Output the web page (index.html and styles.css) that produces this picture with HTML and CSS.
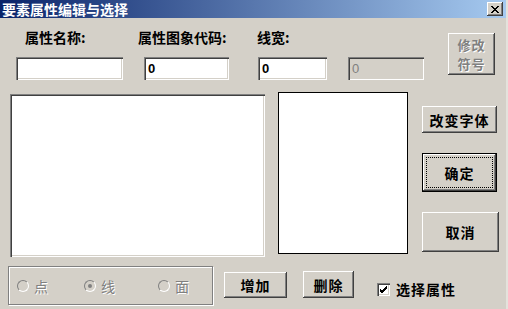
FILE: index.html
```html
<!DOCTYPE html>
<html lang="zh-CN">
<head>
    <meta charset="UTF-8">
    <title>要素属性编辑与选择</title>
    <link rel="stylesheet" href="styles.css">
</head>
<body>
    <div class="window">
        <div class="titlebar">
            <span class="title">要素属性编辑与选择</span>
            <span class="close">
                <svg width="8" height="7" viewBox="0 0 8 7">
                    <path d="M0 0 L7 7 M1 0 L8 7 M7 0 L0 7 M8 0 L1 7" stroke="#000" stroke-width="1" fill="none"/>
                </svg>
            </span>
        </div>
        <div class="content">
            <div class="top">
                <div class="field f-name">
                    <span class="label">属性名称:</span>
                    <div class="edit"></div>
                </div>
                <div class="field f-code">
                    <span class="label">属性图象代码:</span>
                    <div class="edit">0</div>
                </div>
                <div class="field f-width">
                    <span class="label">线宽:</span>
                    <div class="edit">0</div>
                </div>
                <div class="field f-extra">
                    <span class="label">&nbsp;</span>
                    <div class="edit disabled">0</div>
                </div>
                <div class="btn btn-symbol disabled">
                    <span class="line">修改</span>
                    <span class="line">符号</span>
                </div>
            </div>

            <div class="middle">
                <div class="listbox big"></div>
                <div class="listbox small"></div>
                <div class="actions">
                    <div class="btn btn-font">改变字体</div>
                    <div class="btn btn-ok"><span class="focus">确定</span></div>
                    <div class="btn btn-cancel">取消</div>
                </div>
            </div>

            <div class="bottom">
                <div class="group">
                    <div class="radio r1"><span class="dot"></span><span class="rlabel">点</span></div>
                    <div class="radio r2"><span class="dot checked"></span><span class="rlabel">线</span></div>
                    <div class="radio r3"><span class="dot"></span><span class="rlabel">面</span></div>
                </div>
                <div class="btn btn-add">增加</div>
                <div class="btn btn-del">删除</div>
                <div class="check">
                    <span class="box">
                        <svg width="9" height="9" viewBox="0 0 9 9">
                            <path d="M1 4 L3 6 L8 1 M1 5 L3 7 L8 2 M1 6 L3 8 L8 3" stroke="#000" stroke-width="1" fill="none"/>
                        </svg>
                    </span>
                    <span class="clabel">选择属性</span>
                </div>
            </div>
        </div>
    </div>
</body>
</html>
```

FILE: styles.css
```css
body {
    margin: 0;
    background-color: #d4d0c8;
    font-family: "Noto Sans CJK SC", "DejaVu Sans", sans-serif;
    font-size: 14px;
    color: #000;
}
.window {
    width: 506px;
    height: 309px;
    background-color: #d4d0c8;
    border-right: 2px solid #e4e2dc;
    overflow: hidden;
}
.titlebar {
    height: 18px;
    display: flex;
    align-items: center;
    justify-content: space-between;
    padding: 0 3px 0 2px;
    background: linear-gradient(to right, #0a246a, #a6caf0);
}
.title {
    color: #fff;
    font-weight: bold;
    font-size: 14px;
    line-height: 18px;
}
.close {
    width: 16px;
    height: 14px;
    display: flex;
    align-items: center;
    justify-content: center;
    background-color: #d4d0c8;
    box-shadow: inset -1px -1px #404040, inset 1px 1px #fff, inset -2px -2px #808080;
}

/* top row */
.top {
    display: flex;
    align-items: flex-start;
    padding: 11px 0 0 16px;
    height: 51px;
}
.field {
    display: flex;
    flex-direction: column;
}
.label {
    font-weight: bold;
    line-height: 16px;
    height: 16px;
    margin-bottom: 12px;
    white-space: nowrap;
}
.f-name { width: 107px; margin-right: 21px; }
.f-name .label { margin-left: 9px; }
.f-code { width: 85px; margin-right: 29px; }
.f-code .label { margin-left: -6px; }
.f-width { width: 69px; margin-right: 21px; }
.f-width .label { margin-left: -1px; }
.f-extra { width: 76px; margin-right: 24px; }
.edit {
    height: 23px;
    background-color: #fff;
    box-shadow: inset 1px 1px #808080, inset 2px 2px #404040, inset -1px -1px #fff, inset -2px -2px #d4d0c8;
    padding: 0 4px;
    font-family: "Liberation Sans", Arial, sans-serif;
    font-weight: bold;
    font-size: 13px;
    line-height: 24px;
}
.edit.disabled {
    background-color: #d4d0c8;
    color: #808080;
    font-weight: normal;
}

/* buttons */
.btn {
    box-sizing: border-box;
    display: flex;
    align-items: center;
    justify-content: center;
    background-color: #d4d0c8;
    box-shadow: inset -1px -1px #404040, inset 1px 1px #fff, inset -2px -2px #808080, inset 2px 2px #d4d0c8;
    font-weight: bold;
    font-size: 14px;
    letter-spacing: 1px;
}
.btn.disabled {
    color: #808080;
    text-shadow: 1px 1px #fff;
}
.btn-symbol {
    width: 47px;
    height: 42px;
    margin-top: 4px;
    flex-direction: column;
}
.btn-symbol .line {
    display: block;
    font-size: 13px;
    line-height: 19px;
    height: 19px;
}

/* middle */
.middle {
    display: flex;
    align-items: flex-start;
    margin-top: 12px;
    height: 165px;
}
.listbox {
    box-sizing: border-box;
    background-color: #fff;
}
.big {
    width: 255px;
    height: 163px;
    margin: 2px 0 0 10px;
    box-shadow: inset 1px 1px #808080, inset 2px 2px #404040, inset -1px -1px #fff, inset -2px -2px #d4d0c8;
}
.small {
    width: 130px;
    height: 162px;
    margin-left: 13px;
    border: 1px solid #000;
}
.actions {
    display: flex;
    flex-direction: column;
    margin-left: 14px;
    padding-top: 14px;
    gap: 20px;
}
.btn-font { width: 75px; height: 27px; }
.btn-ok {
    width: 75px;
    height: 39px;
    border: 1px solid #000;
    padding: 3px;
}
.btn-ok .focus {
    flex: 1;
    align-self: stretch;
    display: flex;
    align-items: center;
    justify-content: center;
    border: 1px dotted #000;
}
.btn-cancel { width: 77px; height: 40px; }

/* bottom */
.bottom {
    display: flex;
    align-items: flex-start;
    margin-top: 9px;
}
.group {
    box-sizing: border-box;
    width: 205px;
    height: 39px;
    margin-left: 8px;
    display: flex;
    align-items: center;
    padding-left: 8px;
    border: 1px solid #808080;
    box-shadow: inset 1px 1px #fff, 1px 1px #fff;
}
.radio {
    display: flex;
    align-items: center;
    color: #808080;
    text-shadow: 1px 1px #fff;
}
.r1 { width: 67px; }
.r2 { width: 74px; }
.dot {
    box-sizing: border-box;
    width: 12px;
    height: 12px;
    border-radius: 50%;
    border: 1px solid;
    border-color: #808080 #fff #fff #808080;
    background-color: #d4d0c8;
    margin-right: 5px;
    display: flex;
    align-items: center;
    justify-content: center;
}
.dot.checked::after {
    content: "";
    width: 4px;
    height: 4px;
    border-radius: 50%;
    background-color: #808080;
}
.rlabel {
    font-size: 14px;
}
.btn-add {
    width: 63px;
    height: 26px;
    margin: 6px 0 0 11px;
}
.btn-del {
    width: 51px;
    height: 27px;
    margin: 5px 0 0 16px;
}
.check {
    display: flex;
    align-items: center;
    margin: 13px 0 0 23px;
}
.box {
    box-sizing: border-box;
    width: 13px;
    height: 13px;
    background-color: #fff;
    box-shadow: inset 1px 1px #808080, inset 2px 2px #404040, inset -1px -1px #fff, inset -2px -2px #d4d0c8;
    display: flex;
    align-items: center;
    justify-content: center;
    margin-right: 6px;
}
.clabel {
    font-weight: bold;
    letter-spacing: 1px;
}
```
